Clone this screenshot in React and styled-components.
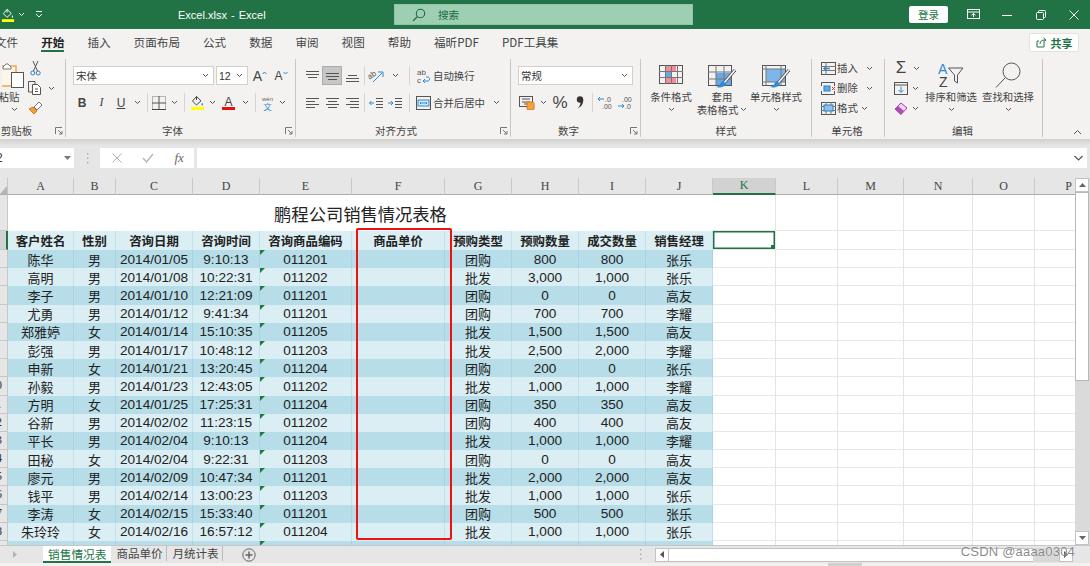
import React from 'react';
import styled, { createGlobalStyle } from 'styled-components';

const SANS = '"Liberation Sans", "Noto Sans CJK SC", sans-serif';
const CJK = '"Noto Sans CJK SC", "Liberation Sans", sans-serif';
const GREEN = '#217346';
const RIBBON = '#f3f2f1';
const BAND = '#e6e6e6';

const GlobalStyle = createGlobalStyle`
  html, body { margin: 0; padding: 0; overflow: hidden; background: #fff; }
  * { box-sizing: border-box; }
`;

const Page = styled.div`
  position: relative;
  width: 1090px;
  height: 566px;
  overflow: hidden;
  font-family: ${CJK};
  color: #333;
`;

/* title bar */
const TitleBar = styled.div`
  display: flex;
  align-items: center;
  height: 29px;
  background: ${GREEN};
  color: #fff;
`;
const QatItem = styled.div`
  display: flex;
  justify-content: center;
  align-items: center;
  width: ${(p) => p.$w}px;
  margin-left: ${(p) => p.$ml || 0}px;
`;
const DocTitle = styled.div`
  width: 87px;
  margin-left: 130px;
  font: 11px ${SANS};
  word-spacing: -1px;
  white-space: pre;
`;
const SearchBox = styled.div`
  display: flex;
  align-items: center;
  gap: 12px;
  width: 299px;
  height: 21px;
  margin-left: 129px;
  padding-left: 17px;
  background: #9fcfb3;
  border: 1px solid #8fc4a6;
  color: #1e6b41;
  font-size: 10.6px;
`;
const LoginButton = styled.div`
  width: 39px;
  height: 17px;
  margin: 0 8px 0 216px;
  background: #fff;
  border-radius: 2px;
  color: ${GREEN};
  font-size: 10.5px;
  line-height: 17px;
  text-align: center;
`;
const WinButton = styled.div`
  display: flex;
  justify-content: center;
  width: ${(p) => p.$w}px;
`;

/* ribbon tabs */
const TabRow = styled.div`
  display: flex;
  align-items: flex-start;
  height: 29px;
  padding: 5px 11px 0 0;
  margin-left: -5px;
  gap: 23px;
  background: ${RIBBON};
`;
const RibbonTab = styled.div`
  height: 18px;
  font-size: 11.6px;
  line-height: 16px;
  white-space: nowrap;
  color: ${(p) => (p.$active ? '#222' : '#444')};
  font-weight: ${(p) => (p.$active ? 700 : 400)};
  border-bottom: 2px solid ${(p) => (p.$active ? GREEN : 'transparent')};
`;
const ShareButton = styled.div`
  display: flex;
  align-items: center;
  justify-content: center;
  gap: 4px;
  width: 50px;
  height: 19px;
  margin: -1px 0 0 auto;
  background: #fff;
  border: 1px solid #e4e2e0;
  border-radius: 2px;
  color: ${GREEN};
  font-size: 11px;
  font-weight: 700;
`;

/* ribbon */
const Ribbon = styled.div`
  display: flex;
  height: 81px;
  background: ${RIBBON};
`;
const Group = styled.div`
  display: flex;
  flex-direction: column;
  flex: none;
  width: ${(p) => p.$w}px;
  height: 78px;
  margin-top: 1px;
  border-right: 1px solid #c8c6c4;
`;
const GroupBody = styled.div`
  display: flex;
  flex: 1;
  min-height: 0;
  padding-left: ${(p) => p.$pl || 0}px;
`;
const GroupFoot = styled.div`
  display: grid;
  grid-template-columns: 1fr auto 1fr;
  align-items: center;
  height: 14px;
  margin-bottom: -1px;
  font-size: 10.5px;
  line-height: 14px;
  color: #444;
`;
const GroupName = styled.span`
  grid-column: 2;
  transform: translateX(${(p) => p.$dx || 0}px);
  white-space: nowrap;
`;
const Launcher = styled.span`
  grid-column: 3;
  justify-self: end;
  display: flex;
  margin-right: 2px;
`;
const Stack = styled.div`
  display: flex;
  flex-direction: column;
  gap: 8px;
  padding-top: 7px;
`;
const ToolRow = styled.div`
  display: flex;
  align-items: center;
  height: 19px;
`;
const CompactStack = styled.div`
  display: flex;
  flex-direction: column;
  margin-top: -1px;
`;
const CompactRow = styled.div`
  display: flex;
  align-items: center;
  height: 20px;
`;
const Tool = styled.div`
  display: flex;
  flex: none;
  align-items: center;
  justify-content: center;
  width: ${(p) => p.$w}px;
  height: 19px;
  background: ${(p) => (p.$on ? '#c6c6c6' : 'transparent')};
  border: ${(p) => (p.$on ? '1px solid #adadad' : 'none')};
`;
const Rule = styled.div`
  flex: none;
  width: 1px;
  height: 19px;
  margin: 0 ${(p) => p.$r ?? 3}px 0 ${(p) => p.$l ?? 3}px;
  background: #d6d4d2;
`;
const Select = styled.div`
  display: flex;
  flex: none;
  align-items: center;
  justify-content: space-between;
  width: ${(p) => p.$w}px;
  height: 19px;
  margin-right: 2px;
  padding: 0 4px 0 2px;
  background: #fff;
  border: 1px solid #d2d0ce;
  font: 10.5px ${SANS};
  color: #333;
`;
const ToolText = styled.span`
  width: ${(p) => (p.$w ? `${p.$w}px` : 'auto')};
  flex: none;
  font-size: 10.4px;
  line-height: 14px;
  white-space: nowrap;
  color: #444;
`;
const FaceLetter = styled.span`
  font: ${(p) => p.$weight || 400} ${(p) => p.$size || 13}px ${(p) => (p.$serif ? '"Liberation Serif", serif' : SANS)};
  font-style: ${(p) => (p.$italic ? 'italic' : 'normal')};
  text-decoration: ${(p) => (p.$under ? 'underline' : 'none')};
  color: #444;
`;
const BigButton = styled.div`
  display: flex;
  flex: none;
  flex-direction: column;
  align-items: center;
  width: ${(p) => p.$w}px;
  margin-left: ${(p) => p.$ml || 0}px;
`;
const BigIcon = styled.div`
  display: flex;
  align-items: flex-start;
  justify-content: center;
  height: 31px;
  padding-top: ${(p) => p.$top}px;
`;
const BigText = styled.div`
  display: flex;
  align-items: center;
  gap: 2px;
  height: 13px;
  font-size: 10.4px;
  line-height: 13px;
  white-space: nowrap;
  color: #444;
`;
const PasteColumn = styled.div`
  display: flex;
  flex: none;
  flex-direction: column;
  align-items: center;
  width: 26px;
  padding-left: 2px;
`;
const PasteText = styled(BigText)`
  margin-left: -10px;
`;
const RibbonEnd = styled.div`
  display: flex;
  flex: 1;
  align-items: flex-end;
  justify-content: flex-end;
  padding: 0 8px 4px 0;
`;

/* formula bar */
const FormulaBand = styled.div`
  display: flex;
  height: 39px;
  padding-top: 9px;
  background: linear-gradient(#d2d1d0, ${BAND} 7px);
`;
const NameBox = styled.div`
  display: flex;
  flex: none;
  align-items: center;
  justify-content: space-between;
  width: 74px;
  height: 20px;
  padding-right: 3px;
  background: #fff;
  font: 12px ${SANS};
  text-indent: -4px;
`;
const BandDots = styled.div`
  display: flex;
  flex: none;
  justify-content: center;
  align-items: center;
  width: 26px;
  height: 20px;
`;
const FxBox = styled.div`
  display: flex;
  flex: none;
  align-items: center;
  justify-content: space-around;
  width: 94px;
  height: 20px;
  padding-left: 2px;
  background: #fff;
`;
const FxLabel = styled.span`
  font: italic 13px "Liberation Serif", serif;
  color: #666;
`;
const FormulaInput = styled.div`
  display: flex;
  flex: 1;
  align-items: center;
  justify-content: flex-end;
  height: 20px;
  margin: 0 3px;
  padding-right: 4px;
  background: #fff;
`;

/* sheet */
const Sheet = styled.div`
  display: flex;
  height: 367px;
`;
const SheetViewport = styled.div`
  position: relative;
  flex: none;
  width: 1075px;
  overflow: hidden;
  background: #fff;
`;
const CellGrid = styled.div`
  display: grid;
  grid-template-columns: 8px 66px 42px 77px 67px 92px 93px 67px 67px 67px 67px 63px 62px 66px 69px 62px 68px;
  grid-template-rows: 17px 36px 19px repeat(17, 18.2px);
`;
const Corner = styled.div`
  display: flex;
  align-items: flex-end;
  background: ${BAND};
  border-right: 1px solid #c6c6c6;
  border-bottom: 1px solid #ababab;
`;
const ColHead = styled.div`
  display: flex;
  align-items: center;
  justify-content: center;
  background: ${(p) => (p.$on ? '#d2d2d2' : BAND)};
  border-right: 1px solid #c9c9c9;
  border-bottom: ${(p) => (p.$on ? `2px solid ${GREEN}` : '1px solid #ababab')};
  font: 12px "Liberation Serif", serif;
  color: ${(p) => (p.$on ? GREEN : '#444')};
`;
const RowHead = styled.div`
  overflow: hidden;
  background: ${(p) => (p.$on ? '#d2d2d2' : BAND)};
  border-right: ${(p) => (p.$on ? `2px solid ${GREEN}` : '1px solid #c6c6c6')};
  border-bottom: 1px solid #c6c6c6;
`;
const RowNum = styled.div`
  width: 40px;
  margin-left: -24px;
  font: 12px/17px "Liberation Serif", serif;
  text-align: center;
  color: #333;
`;
const TitleCell = styled.div`
  grid-column: 2 / 12;
  display: flex;
  align-items: center;
  justify-content: center;
  font-size: 17.3px;
  color: #222;
  background: #fff;
`;
const Cell = styled.div`
  position: relative;
  display: flex;
  align-items: center;
  justify-content: center;
  overflow: hidden;
  white-space: nowrap;
  background: ${(p) => (p.$dark ? '#b6dde8' : '#daeef3')};
  border-right: 1px solid ${(p) => (p.$dark ? '#a6d5e2' : '#bfe2ec')};
  font: ${(p) => (p.$num ? `13.6px ${SANS}` : `13px ${CJK}`)};
  color: #222;
  &::before {
    content: ${(p) => (p.$flag ? "''" : 'none')};
    position: absolute;
    top: 0;
    left: 0;
    border-top: 5px solid #1c7c3c;
    border-right: 5px solid transparent;
  }
`;
const HeadCell = styled(Cell)`
  font: 700 12.4px ${CJK};
  background: #daeef3;
  border-right-color: #bfe2ec;
`;
const BlankCell = styled.div`
  position: relative;
  background: #fff;
  border-right: 1px solid #e4e4e4;
  border-bottom: 1px solid #e8e8e8;
  box-shadow: ${(p) => (p.$on ? `inset 0 0 0 1.5px ${GREEN}` : 'none')};
  &::after {
    content: ${(p) => (p.$on ? "''" : 'none')};
    position: absolute;
    right: 0;
    bottom: 0;
    width: 4px;
    height: 4px;
    background: ${GREEN};
  }
`;
const RedFrame = styled.div`
  position: absolute;
  top: 50px;
  left: 356px;
  width: 96px;
  height: 312px;
  border: 2.5px solid #ee1111;
  border-radius: 2px;
  pointer-events: none;
`;
const VScroll = styled.div`
  display: flex;
  flex: none;
  flex-direction: column;
  width: 15px;
  background: #dadada;
`;
const ScrollButton = styled.div`
  display: flex;
  flex: none;
  align-items: center;
  justify-content: center;
  width: 14px;
  height: 14px;
  background: #fff;
  border: 1px solid #c2c2c2;
`;
const VThumb = styled.div`
  width: 14px;
  height: 189px;
  margin-bottom: auto;
  background: #fff;
  border: 1px solid #b8b8b8;
`;

/* sheet tabs */
const SheetTabs = styled.div`
  display: flex;
  height: 18px;
  background: ${BAND};
  border-top: 1px solid #c6c6c6;
`;
const SheetNav = styled.div`
  display: flex;
  flex: none;
  align-items: center;
  width: 43px;
  padding-left: 13px;
`;
const SheetTab = styled.div`
  flex: none;
  padding: 0 ${(p) => (p.$active ? '5px' : '4px 0 5px')};
  font-size: ${(p) => (p.$active ? 11.7 : 11.5)}px;
  line-height: 15px;
  white-space: nowrap;
  color: ${(p) => (p.$active ? GREEN : '#444')};
  background: ${(p) => (p.$active ? '#fff' : 'transparent')};
  border-bottom: ${(p) => (p.$active ? `2px solid ${GREEN}` : 'none')};
  border-right: ${(p) => (p.$active ? 'none' : '1px solid #bbb')};
  height: ${(p) => (p.$active ? 17 : 15)}px;
`;
const AddSheet = styled.div`
  display: flex;
  flex: none;
  align-items: center;
  margin-left: 19px;
`;
const HScroll = styled.div`
  display: flex;
  flex: none;
  align-items: center;
  height: 17px;
  margin: 0 17px 0 auto;
`;
const HDots = styled.div`
  display: flex;
  width: 16px;
  justify-content: flex-start;
`;
const HTrack = styled.div`
  width: 364px;
  height: 14px;
  background: #fff;
  border-top: 1px solid #c2c2c2;
  border-bottom: 1px solid #c2c2c2;
`;
const HRest = styled.div`
  width: 26px;
  height: 14px;
  background: #d8d8d8;
`;
const StatusStrip = styled.div`
  height: 3px;
  padding-left: 828px;
  background: ${RIBBON};
`;
const StatusBlock = styled.div`
  width: 34px;
  height: 3px;
  background: #d2d0ce;
`;
const Watermark = styled.div`
  position: absolute;
  right: 15px;
  bottom: 7px;
  font: 13px ${SANS};
  letter-spacing: 0.2px;
  color: rgba(90, 90, 90, 0.72);
  text-shadow: 0 0 1px #fff;
`;

/* icons */
const Chev = ({ color = '#555' }) => (
  <svg width="7" height="5" viewBox="0 0 7 5"><path d="M1 1l2.5 2.5L6 1" fill="none" stroke={color} strokeWidth="1" /></svg>
);
const Launch = () => (
  <svg width="8" height="8" viewBox="0 0 8 8" fill="none" stroke="#777">
    <path d="M.5 7V.5H7" /><path d="M3 3l4 4M7 4v3H4" />
  </svg>
);
const TriDown = ({ c = '#777' }) => <svg width="7" height="4" viewBox="0 0 7 4"><path d="M0 0h7L3.5 4z" fill={c} /></svg>;
const Dots = () => (
  <svg width="3" height="11" viewBox="0 0 3 11" fill="#a8a8a8">
    <rect x="1" y="0" width="1.4" height="1.4" /><rect x="1" y="4.5" width="1.4" height="1.4" /><rect x="1" y="9" width="1.4" height="1.4" />
  </svg>
);
const FillBucket = ({ stroke = '#444', bar = '#ffff00', size = 15 }) => (
  <svg width={size} height={size} viewBox="0 0 15 15" fill="none">
    <path d="M6.5 1.5l-4 4.5 4 4 4.5-4.2z" stroke={stroke} />
    <path d="M6.5 1.5V5" stroke={stroke} />
    <path d="M12 7.5c1 1.4 1.3 2.2.6 2.8-.7.4-1.4-.4-1-1.2z" fill={stroke === '#fff' ? '#fff' : '#2a7ab8'} />
    <rect x="1" y="12" width="13" height="3" fill={bar} />
  </svg>
);
const Search = () => (
  <svg width="14" height="14" viewBox="0 0 14 14" fill="none" stroke="#1e6b41" strokeWidth="1.1">
    <circle cx="8.5" cy="5.5" r="4.2" /><path d="M5.5 8.5L1 13" />
  </svg>
);
const Lines = ({ rows, width = 13 }) => (
  <svg width={width} height="14" viewBox={`0 0 ${width} 14`} stroke="#555">
    {rows.map(([y, x1, x2]) => <path key={y} d={`M${x1} ${y + 0.5}H${x2}`} />)}
  </svg>
);
const Grid = ({ w = 24, h = 19, cols, rows, children }) => (
  <svg width={w} height={h} viewBox={`0 0 ${w} ${h}`} fill="none">
    {children}
    <rect x=".5" y=".5" width={w - 1} height={h - 1} stroke="#555" />
    {cols.map((x) => <path key={x} d={`M${x + 0.5} 0V${h}`} stroke="#777" />)}
    {rows.map((y) => <path key={y} d={`M0 ${y + 0.5}H${w}`} stroke="#777" />)}
  </svg>
);
const Brush = () => (
  <g>
    <path d="M27 5L16 18" stroke="#555" strokeWidth="3" />
    <path d="M27 5L16 18" stroke="#fff" strokeWidth="1.4" />
    <path d="M15 16c-3 1-2 5-7 6 4 1 9 0 10-3z" fill="#2d8ad4" />
  </g>
);

const COLS = ['A', 'B', 'C', 'D', 'E', 'F', 'G', 'H', 'I', 'J', 'K', 'L', 'M', 'N', 'O', 'P'];
const HEADS = ['客户姓名', '性别', '咨询日期', '咨询时间', '咨询商品编码', '商品单价', '预购类型', '预购数量', '成交数量', '销售经理'];
const ROWS = [
  ['陈华', '男', '2014/01/05', '9:10:13', '011201', '团购', '800', '800', '张乐'],
  ['高明', '男', '2014/01/08', '10:22:31', '011202', '批发', '3,000', '1,000', '张乐'],
  ['李子', '男', '2014/01/10', '12:21:09', '011201', '团购', '0', '0', '高友'],
  ['尤勇', '男', '2014/01/12', '9:41:34', '011201', '团购', '700', '700', '李耀'],
  ['郑雅婷', '女', '2014/01/14', '15:10:35', '011205', '批发', '1,500', '1,500', '高友'],
  ['彭强', '男', '2014/01/17', '10:48:12', '011203', '批发', '2,500', '2,000', '李耀'],
  ['申新', '女', '2014/01/21', '13:20:45', '011204', '团购', '200', '0', '张乐'],
  ['孙毅', '男', '2014/01/23', '12:43:05', '011202', '批发', '1,000', '1,000', '李耀'],
  ['方明', '女', '2014/01/25', '17:25:31', '011204', '团购', '350', '350', '高友'],
  ['谷新', '男', '2014/02/02', '11:23:15', '011202', '团购', '400', '400', '高友'],
  ['平长', '男', '2014/02/04', '9:10:13', '011204', '批发', '1,000', '1,000', '李耀'],
  ['田秘', '女', '2014/02/04', '9:22:31', '011203', '团购', '0', '0', '高友'],
  ['廖元', '男', '2014/02/09', '10:47:34', '011201', '批发', '2,000', '2,000', '高友'],
  ['钱平', '男', '2014/02/14', '13:00:23', '011203', '批发', '1,000', '1,000', '张乐'],
  ['李涛', '女', '2014/02/15', '15:33:40', '011201', '团购', '500', '500', '张乐'],
  ['朱玲玲', '女', '2014/02/16', '16:57:12', '011204', '批发', '1,000', '1,000', '张乐'],
  ['', '', '', '', '', '', '', '', ''],
];
const BLANKS = COLS.slice(10);
const TABS = ['文件', '开始', '插入', '页面布局', '公式', '数据', '审阅', '视图', '帮助', '福昕PDF', 'PDF工具集'];

const DataRow = ({ row, index }) => {
  const dark = index % 2 === 0;
  const [name, sex, date, time, code, kind, buy, done, boss] = row;
  return (
    <>
      <RowHead><RowNum>{index + 3}</RowNum></RowHead>
      <Cell $dark={dark}>{name}</Cell>
      <Cell $dark={dark}>{sex}</Cell>
      <Cell $dark={dark} $num>{date}</Cell>
      <Cell $dark={dark} $num>{time}</Cell>
      <Cell $dark={dark} $num $flag>{code}</Cell>
      <Cell $dark={dark} />
      <Cell $dark={dark}>{kind}</Cell>
      <Cell $dark={dark} $num>{buy}</Cell>
      <Cell $dark={dark} $num>{done}</Cell>
      <Cell $dark={dark}>{boss}</Cell>
      {BLANKS.map((c) => <BlankCell key={c} />)}
    </>
  );
};

const App = () => (
  <Page>
    <GlobalStyle />
    <TitleBar>
      <QatItem $w={16}><FillBucket stroke="#fff" size={14} /></QatItem>
      <QatItem $w={10}><Chev color="#fff" /></QatItem>
      <QatItem $w={18} $ml={4}>
        <svg width="8" height="7" viewBox="0 0 8 7" fill="none" stroke="#fff"><path d="M1 .5h6M1 3l3 3 3-3" /></svg>
      </QatItem>
      <DocTitle>Excel.xlsx  -  Excel</DocTitle>
      <SearchBox><Search />搜索</SearchBox>
      <LoginButton>登录</LoginButton>
      <WinButton $w={34}>
        <svg width="13" height="11" viewBox="0 0 13 11" fill="none" stroke="#fff"><rect x=".5" y=".5" width="12" height="9" /><path d="M.5 3h12" /><path d="M6.5 8V4.5M4.5 6.3l2-1.8 2 1.8" /></svg>
      </WinButton>
      <WinButton $w={34}><svg width="10" height="10" viewBox="0 0 10 10"><path d="M0 5.5h10" stroke="#fff" /></svg></WinButton>
      <WinButton $w={33}>
        <svg width="10" height="10" viewBox="0 0 10 10" fill="none" stroke="#fff"><rect x=".5" y="2.5" width="7" height="7" rx="1" /><path d="M2.5 2.5V1.5a1 1 0 0 1 1-1h5a1 1 0 0 1 1 1v5a1 1 0 0 1-1 1h-1" /></svg>
      </WinButton>
      <WinButton $w={33}><svg width="10" height="10" viewBox="0 0 10 10" stroke="#fff"><path d="M.5.5l9 9M9.5.5l-9 9" /></svg></WinButton>
    </TitleBar>

    <TabRow>
      {TABS.map((t) => <RibbonTab key={t} $active={t === '开始'}>{t}</RibbonTab>)}
      <ShareButton>
        <svg width="11" height="11" viewBox="0 0 11 11" fill="none" stroke="#217346"><path d="M8 5v5H1V4h2" /><path d="M4 7c0-3 2-4 5-4M7.5 1L10 3 7.5 5" /></svg>
        共享
      </ShareButton>
    </TabRow>

    <Ribbon>
      <Group $w={66}>
        <GroupBody>
          <PasteColumn>
            <BigIcon $top={3}>
              <svg width="24" height="27" viewBox="0 0 24 27" fill="none">
                <rect x="-6" y="4" width="20" height="20" stroke="#e8a33d" strokeWidth="1.4" fill="#fdf6e8" />
                <path d="M1 5l3-3h2l3 3v2H1z" fill="#fff" stroke="#777" />
                <rect x="9.5" y="10.5" width="12" height="15" fill="#fff" stroke="#555" />
              </svg>
            </BigIcon>
            <PasteText>粘贴</PasteText>
            <BigText><Chev /></BigText>
          </PasteColumn>
          <CompactStack>
            <CompactRow>
              <Tool $w={18}>
                <svg width="11" height="15" viewBox="0 0 11 15" fill="none">
                  <path d="M3 0l4.5 10M8 0L3.5 10" stroke="#555" />
                  <circle cx="2.8" cy="12" r="2" stroke="#2d7fc1" /><circle cx="8.2" cy="12" r="2" stroke="#2d7fc1" />
                </svg>
              </Tool>
            </CompactRow>
            <CompactRow>
              <Tool $w={18}>
                <svg width="15" height="14" viewBox="0 0 15 14" fill="none" stroke="#555">
                  <path d="M5 11H.5V.5H7V3" /><path d="M4.5 3.5h5l3 3v7h-8z" fill="#fff" /><path d="M7 8h3M7 10.5h3" />
                </svg>
              </Tool>
              <Tool $w={14}><Chev /></Tool>
            </CompactRow>
            <CompactRow>
              <Tool $w={18}>
                <svg width="15" height="14" viewBox="0 0 15 14">
                  <path d="M1 8l5 5 3-3-4-4z" fill="#f0a040" stroke="#d9791c" />
                  <path d="M6 6l5-5 3 3-5 5z" fill="#fff" stroke="#777" />
                </svg>
              </Tool>
            </CompactRow>
          </CompactStack>
        </GroupBody>
        <GroupFoot>
          <GroupName $dx={-16}>剪贴板</GroupName>
          <Launcher><Launch /></Launcher>
        </GroupFoot>
      </Group>

      <Group $w={230}>
        <GroupBody $pl={7}>
          <Stack>
            <ToolRow>
              <Select $w={141}><span>宋体</span><Chev /></Select>
              <Select $w={32}><span>12</span><Chev /></Select>
              <Tool $w={20}>
                <FaceLetter $size={14}>A</FaceLetter>
                <svg width="5" height="10" viewBox="0 0 5 10"><path d="M.5 3L2.5 1l2 2" fill="none" stroke="#2d7fc1" /></svg>
              </Tool>
              <Tool $w={22}>
                <FaceLetter $size={12}>A</FaceLetter>
                <svg width="5" height="10" viewBox="0 0 5 10"><path d="M.5 1l2 2 2-2" fill="none" stroke="#2d7fc1" /></svg>
              </Tool>
            </ToolRow>
            <ToolRow>
              <Tool $w={18}><FaceLetter $weight={700} $size={12}>B</FaceLetter></Tool>
              <Tool $w={21}><FaceLetter $italic $size={12} $serif>I</FaceLetter></Tool>
              <Tool $w={18}><FaceLetter $under $size={12}>U</FaceLetter></Tool>
              <Tool $w={14}><Chev /></Tool>
              <Rule />
              <Tool $w={16}>
                <svg width="14" height="14" viewBox="0 0 14 14" fill="none" stroke="#777"><rect x=".5" y=".5" width="13" height="13" strokeDasharray="1 1" /><path d="M7 0v14M0 7h14" stroke="#555" /><path d="M0 13.5h14" stroke="#444" /></svg>
              </Tool>
              <Tool $w={14}><Chev /></Tool>
              <Rule />
              <Tool $w={18}><FillBucket /></Tool>
              <Tool $w={13}><Chev /></Tool>
              <Tool $w={19}>
                <svg width="15" height="15" viewBox="0 0 15 15"><text x="7.5" y="11" fontSize="12" textAnchor="middle" fontFamily="Liberation Sans" fill="#444">A</text><rect x="1" y="12" width="13" height="3" fill="#e81010" /></svg>
              </Tool>
              <Tool $w={14}><Chev /></Tool>
              <Rule />
              <Tool $w={16}>
                <svg width="15" height="16" viewBox="0 0 15 16">
                  <text x="7.5" y="6" fontSize="6" textAnchor="middle" fontFamily="Liberation Sans" fill="#666">wén</text>
                  <text x="7.5" y="15" fontSize="8.5" textAnchor="middle" fontFamily="Noto Sans CJK SC" fill="#2d8ad4">文</text>
                </svg>
              </Tool>
              <Tool $w={14}><Chev /></Tool>
            </ToolRow>
          </Stack>
        </GroupBody>
        <GroupFoot>
          <GroupName $dx={-8}>字体</GroupName>
          <Launcher><Launch /></Launcher>
        </GroupFoot>
      </Group>

      <Group $w={215}>
        <GroupBody $pl={6}>
          <Stack>
            <ToolRow>
              <Tool $w={20}><Lines rows={[[2, 0, 13], [5, 0, 13], [8, 2, 11]]} /></Tool>
              <Tool $w={20} $on><Lines rows={[[4, 0, 13], [7, 0, 13], [10, 2, 11]]} /></Tool>
              <Tool $w={20}><Lines rows={[[6, 2, 11], [9, 0, 13], [12, 0, 13]]} /></Tool>
              <Rule $l={2} $r={2} />
              <Tool $w={18}>
                <svg width="16" height="14" viewBox="0 0 16 14" fill="none">
                  <text x="1" y="9" fontSize="8" fontFamily="Liberation Sans" fill="#555" transform="rotate(-35 4 9)">ab</text>
                  <path d="M5 13L14 4M10 3h5v5" stroke="#2d8ad4" />
                </svg>
              </Tool>
              <Tool $w={20}><Chev /></Tool>
              <Rule $l={4} />
              <Tool $w={20}>
                <svg width="15" height="17" viewBox="0 0 15 17" fill="none">
                  <text x="1" y="8" fontSize="8" fontFamily="Liberation Sans" fill="#555">ab</text>
                  <text x="1" y="16" fontSize="8" fontFamily="Liberation Sans" fill="#555">c</text>
                  <path d="M10 10h2c2 0 2 4 0 4H7M9 12l-2 2 2 2" stroke="#2d8ad4" />
                </svg>
              </Tool>
              <ToolText>自动换行</ToolText>
            </ToolRow>
            <ToolRow>
              <Tool $w={20}><Lines rows={[[2, 0, 13], [5, 0, 9], [8, 0, 13], [11, 0, 9]]} /></Tool>
              <Tool $w={20}><Lines rows={[[2, 0, 13], [5, 2, 11], [8, 0, 13], [11, 2, 11]]} /></Tool>
              <Tool $w={20}><Lines rows={[[2, 0, 13], [5, 4, 13], [8, 0, 13], [11, 4, 13]]} /></Tool>
              <Rule $l={2} $r={2} />
              <Tool $w={18}>
                <svg width="14" height="12" viewBox="0 0 14 12" fill="none"><path d="M7 1.5h7M7 4.5h7M7 7.5h7M7 10.5h7" stroke="#555" /><path d="M5 6H.5M2.5 4L.5 6l2 2" stroke="#2d8ad4" /></svg>
              </Tool>
              <Tool $w={20}>
                <svg width="14" height="12" viewBox="0 0 14 12" fill="none"><path d="M7 1.5h7M7 4.5h7M7 7.5h7M7 10.5h7" stroke="#555" /><path d="M0 6h5M3 4l2 2-2 2" stroke="#2d8ad4" /></svg>
              </Tool>
              <Rule $l={4} />
              <Tool $w={20}>
                <svg width="15" height="14" viewBox="0 0 15 14" fill="none"><rect x=".5" y=".5" width="14" height="13" stroke="#555" /><rect x="2" y="4" width="11" height="6" stroke="#2d8ad4" fill="#d5e8f6" /><path d="M4 7h7M5 6L4 7l1 1M10 6l1 1-1 1" stroke="#2d8ad4" /></svg>
              </Tool>
              <ToolText $w={60}>合并后居中</ToolText>
              <Chev />
            </ToolRow>
          </Stack>
        </GroupBody>
        <GroupFoot>
          <GroupName $dx={-7}>对齐方式</GroupName>
          <Launcher><Launch /></Launcher>
        </GroupFoot>
      </Group>

      <Group $w={130}>
        <GroupBody $pl={7}>
          <Stack>
            <ToolRow>
              <Select $w={115}><span>常规</span><Chev /></Select>
            </ToolRow>
            <ToolRow>
              <Tool $w={18}>
                <svg width="16" height="14" viewBox="0 0 16 14" fill="none">
                  <rect x=".5" y=".5" width="13" height="10" stroke="#555" /><path d="M3 3h8M3 6h8M5 8h4" stroke="#555" />
                  <rect x="8" y="6" width="7" height="8" rx="1.5" fill="#f3a23d" stroke="#d9791c" />
                </svg>
              </Tool>
              <Tool $w={14}><Chev /></Tool>
              <Tool $w={20}><FaceLetter $size={17}>%</FaceLetter></Tool>
              <Tool $w={20}>
                <svg width="8" height="13" viewBox="0 0 8 13"><circle cx="4" cy="3.5" r="3.2" fill="#333" /><path d="M7.2 3.500C7.5 8 5 11 1.500 12.500 4 10 4.800 8 4.500 5z" fill="#333" /></svg>
              </Tool>
              <Rule $l={2} $r={2} />
              <Tool $w={19}>
                <svg width="16" height="15" viewBox="0 0 16 15" fill="none">
                  <text x="8" y="7" fontSize="7" fontFamily="Liberation Sans" fill="#555">.0</text>
                  <text x="5" y="14" fontSize="7" fontFamily="Liberation Sans" fill="#555">.00</text>
                  <path d="M7 4H1M3 2L1 4l2 2" stroke="#2d8ad4" />
                </svg>
              </Tool>
              <Tool $w={21}>
                <svg width="16" height="15" viewBox="0 0 16 15" fill="none">
                  <text x="5" y="7" fontSize="7" fontFamily="Liberation Sans" fill="#555">.00</text>
                  <text x="8" y="14" fontSize="7" fontFamily="Liberation Sans" fill="#555">.0</text>
                  <path d="M1 11h6M5 9l2 2-2 2" stroke="#2d8ad4" />
                </svg>
              </Tool>
            </ToolRow>
          </Stack>
        </GroupBody>
        <GroupFoot>
          <GroupName $dx={-7}>数字</GroupName>
          <Launcher><Launch /></Launcher>
        </GroupFoot>
      </Group>

      <Group $w={171}>
        <GroupBody $pl={4}>
          <BigButton $w={52}>
            <BigIcon $top={6}>
              <Grid cols={[6, 12, 18]} rows={[6, 12]}>
                <rect x="6" y="1" width="11" height="5" fill="#f48d96" />
                <rect x="6" y="6" width="6" height="6" fill="#68a9e4" />
                <rect x="6" y="12" width="11" height="6" fill="#f48d96" />
              </Grid>
            </BigIcon>
            <BigText>条件格式</BigText>
            <BigText><Chev /></BigText>
          </BigButton>
          <BigButton $w={50}>
            <BigIcon $top={6}>
              <svg width="28" height="24" viewBox="0 0 28 24" fill="none">
                <rect x="8" y="8" width="15" height="12" fill="#68a9e4" />
                <rect x=".5" y=".5" width="23" height="20" stroke="#555" />
                <path d="M8 0v20M16 0v20M0 7h24M0 14h24" stroke="#777" />
                <Brush />
              </svg>
            </BigIcon>
            <BigText>套用</BigText>
            <BigText>表格格式<Chev /></BigText>
          </BigButton>
          <BigButton $w={58}>
            <BigIcon $top={6}>
              <svg width="28" height="24" viewBox="0 0 28 24" fill="none">
                <rect x="4" y="4" width="19" height="13" fill="#7db6ea" />
                <rect x=".5" y=".5" width="23" height="20" stroke="#555" />
                <path d="M0 4h24M4 0v20M19 0v20M0 17h24" stroke="#777" />
                <Brush />
              </svg>
            </BigIcon>
            <BigText>单元格样式</BigText>
            <BigText><Chev /></BigText>
          </BigButton>
        </GroupBody>
        <GroupFoot><GroupName $dx={0}>样式</GroupName></GroupFoot>
      </Group>

      <Group $w={73}>
        <GroupBody $pl={8}>
          <CompactStack>
            <CompactRow>
              <Tool $w={17}>
                <svg width="15" height="13" viewBox="0 0 15 13" fill="none"><rect x=".5" y=".5" width="14" height="12" stroke="#555" /><path d="M0 4.5h15M0 8.5h15M5 0v13" stroke="#777" /><path d="M9 6.5H3M5 4.5l-2 2 2 2" stroke="#2d8ad4" strokeWidth="1.4" /></svg>
              </Tool>
              <ToolText $w={29}>插入</ToolText>
              <Chev />
            </CompactRow>
            <CompactRow>
              <Tool $w={17}>
                <svg width="15" height="13" viewBox="0 0 15 13" fill="none"><path d="M.5 4V.5h13V4M.5 9v3.5h13V9" stroke="#555" /><rect x="3" y="4" width="6" height="5" fill="#68a9e4" stroke="#2d7fc1" /><path d="M11 5l3 3M14 5l-3 3" stroke="#e03030" /></svg>
              </Tool>
              <ToolText $w={29}>删除</ToolText>
              <Chev />
            </CompactRow>
            <CompactRow>
              <Tool $w={17}>
                <svg width="15" height="14" viewBox="0 0 15 14" fill="none"><rect x=".5" y="1.5" width="14" height="12" stroke="#555" /><path d="M0 5.5h15M0 9.5h15M5 1v13M10 1v13" stroke="#777" /><rect x="3" y="4" width="9" height="6" fill="#8fc1ec" stroke="#2d7fc1" /></svg>
              </Tool>
              <ToolText $w={24}>格式</ToolText>
              <Chev />
            </CompactRow>
          </CompactStack>
        </GroupBody>
        <GroupFoot><GroupName $dx={-1}>单元格</GroupName></GroupFoot>
      </Group>

      <Group $w={158}>
        <GroupBody $pl={8}>
          <CompactStack>
            <CompactRow>
              <Tool $w={16}><FaceLetter $size={17}>Σ</FaceLetter></Tool>
              <Tool $w={14}><Chev /></Tool>
            </CompactRow>
            <CompactRow>
              <Tool $w={16}>
                <svg width="14" height="13" viewBox="0 0 14 13" fill="none"><rect x=".5" y=".5" width="13" height="12" stroke="#555" /><path d="M0 3h14" stroke="#555" /><path d="M7 4.5V10M4.5 8L7 10.5 9.500 8" stroke="#2d8ad4" /></svg>
              </Tool>
              <Tool $w={12}><Chev /></Tool>
            </CompactRow>
            <CompactRow>
              <Tool $w={16}>
                <svg width="14" height="13" viewBox="0 0 14 13"><path d="M1 7l6-6 6 5-6 6.500z" fill="#f2d3f0" stroke="#a43aa8" /><path d="M1 7l3-3 6 5-3 3.500z" fill="#b04ab5" /></svg>
              </Tool>
              <Tool $w={12}><Chev /></Tool>
            </CompactRow>
          </CompactStack>
          <BigButton $w={52} $ml={2}>
            <BigIcon $top={3}>
              <svg width="26" height="26" viewBox="0 0 26 26" fill="none">
                <text x="0" y="12" fontSize="14" fontFamily="Liberation Sans" fill="#2d8ad4">A</text>
                <text x="1" y="25" fontSize="14" fontFamily="Liberation Sans" fill="#444">Z</text>
                <path d="M10.500 6h14.500l-5.500 7v8l-3-2v-6z" stroke="#555" />
              </svg>
            </BigIcon>
            <BigText>排序和筛选</BigText>
            <BigText><Chev /></BigText>
          </BigButton>
          <BigButton $w={52} $ml={5}>
            <BigIcon $top={3}>
              <svg width="26" height="27" viewBox="0 0 26 27" fill="none" stroke="#555"><circle cx="16.500" cy="9.500" r="8.500" /><path d="M10 16L1 25.500" /></svg>
            </BigIcon>
            <BigText>查找和选择</BigText>
            <BigText><Chev /></BigText>
          </BigButton>
        </GroupBody>
        <GroupFoot><GroupName $dx={-1}>编辑</GroupName></GroupFoot>
      </Group>

      <RibbonEnd>
        <svg width="9" height="6" viewBox="0 0 9 6"><path d="M1 5l3.500-3.500L8 5" fill="none" stroke="#555" /></svg>
      </RibbonEnd>
    </Ribbon>

    <FormulaBand>
      <NameBox><span>2</span><TriDown /></NameBox>
      <BandDots><Dots /></BandDots>
      <FxBox>
        <svg width="10" height="10" viewBox="0 0 10 10" stroke="#b0b0b0"><path d="M.5.5l9 9M9.500.5l-9 9" /></svg>
        <svg width="12" height="10" viewBox="0 0 12 10" fill="none" stroke="#b0b0b0" strokeWidth="1.2"><path d="M1 5l3.500 4L11 1" /></svg>
        <FxLabel>fx</FxLabel>
      </FxBox>
      <FormulaInput>
        <svg width="9" height="6" viewBox="0 0 9 6"><path d="M.5 1L4.500 5l4-4" fill="none" stroke="#555" strokeWidth="1.2" /></svg>
      </FormulaInput>
    </FormulaBand>

    <Sheet>
      <SheetViewport>
        <CellGrid>
          <Corner>
            <svg width="7" height="8" viewBox="0 0 7 8"><path d="M7 0v8H0z" fill="#b5b5b5" /></svg>
          </Corner>
          {COLS.map((c) => <ColHead key={c} $on={c === 'K'}>{c}</ColHead>)}

          <RowHead><RowNum>1</RowNum></RowHead>
          <TitleCell>鹏程公司销售情况表格</TitleCell>
          {BLANKS.map((c) => <BlankCell key={c} />)}

          <RowHead $on><RowNum>2</RowNum></RowHead>
          {HEADS.map((h) => <HeadCell key={h}>{h}</HeadCell>)}
          {BLANKS.map((c) => <BlankCell key={c} $on={c === 'K'} />)}

          {ROWS.map((row, i) => <DataRow key={i} row={row} index={i} />)}
        </CellGrid>
        <RedFrame />
      </SheetViewport>
      <VScroll>
        <ScrollButton><svg width="7" height="4" viewBox="0 0 7 4"><path d="M0 4h7L3.500 0z" fill="#666" /></svg></ScrollButton>
        <VThumb />
        <ScrollButton><TriDown c="#666" /></ScrollButton>
      </VScroll>
    </Sheet>

    <SheetTabs>
      <SheetNav>
        <svg width="4" height="7" viewBox="0 0 4 7"><path d="M0 0l4 3.500L0 7z" fill="#b5b5b5" /></svg>
      </SheetNav>
      <SheetTab $active>销售情况表</SheetTab>
      <SheetTab>商品单价</SheetTab>
      <SheetTab>月统计表</SheetTab>
      <AddSheet>
        <svg width="14" height="14" viewBox="0 0 14 14" fill="none" stroke="#666"><circle cx="7" cy="7" r="6.200" /><path d="M3.500 7h7M7 3.500v7" strokeWidth="1.500" /></svg>
      </AddSheet>
      <HScroll>
        <HDots><Dots /></HDots>
        <ScrollButton><svg width="4" height="7" viewBox="0 0 4 7"><path d="M4 0L0 3.500 4 7z" fill="#555" /></svg></ScrollButton>
        <HTrack />
        <HRest />
        <ScrollButton><svg width="4" height="7" viewBox="0 0 4 7"><path d="M0 0l4 3.500L0 7z" fill="#555" /></svg></ScrollButton>
      </HScroll>
    </SheetTabs>
    <StatusStrip><StatusBlock /></StatusStrip>
    <Watermark>CSDN @aaaa0304</Watermark>
  </Page>
);

export default App;
